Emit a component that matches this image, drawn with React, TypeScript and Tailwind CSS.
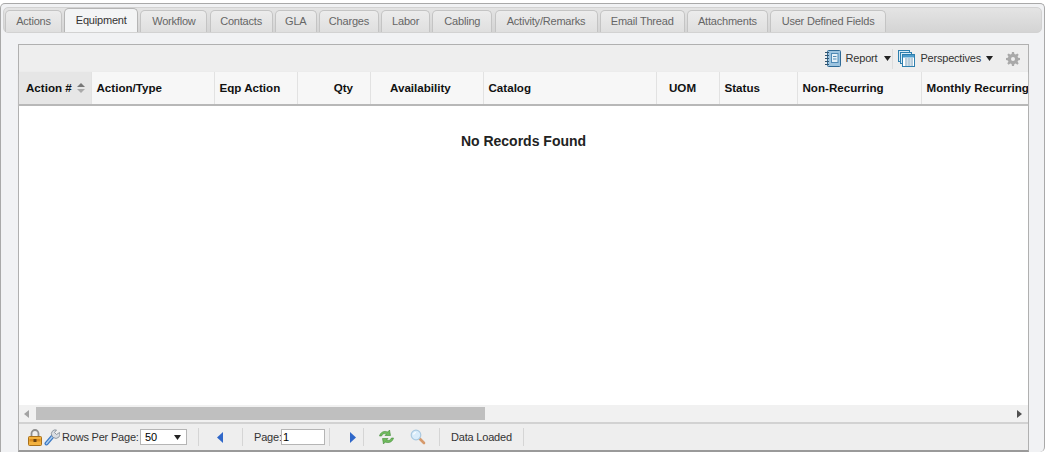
const tabs = [
  { label: 'Actions', width: 'w-[57px]' },
  { label: 'Equipment', width: 'w-[74px]', active: true },
  { label: 'Workflow', width: 'w-[67px]' },
  { label: 'Contacts', width: 'w-[63px]' },
  { label: 'GLA', width: 'w-[42px]' },
  { label: 'Charges', width: 'w-[60px]' },
  { label: 'Labor', width: 'w-[49px]' },
  { label: 'Cabling', width: 'w-[60px]' },
  { label: 'Activity/Remarks', width: 'w-[103px]' },
  { label: 'Email Thread', width: 'w-[85px]' },
  { label: 'Attachments', width: 'w-[81px]' },
  { label: 'User Defined Fields', width: 'w-[116px]' },
];

const columns = [
  { label: 'Action #', width: 'w-[73px]', sorted: true },
  { label: 'Action/Type', width: 'w-[123px]' },
  { label: 'Eqp Action', width: 'w-[83px]' },
  { label: 'Qty', width: 'w-[73px]', align: 'justify-end pr-[17px]' },
  { label: 'Availability', width: 'w-[113px]', align: 'pl-[19px]' },
  { label: 'Catalog', width: 'w-[173px]' },
  { label: 'UOM', width: 'w-[63px]', align: 'pl-[12px]' },
  { label: 'Status', width: 'w-[78px]' },
  { label: 'Non-Recurring', width: 'w-[124px]' },
  { label: 'Monthly Recurring', width: 'w-[107px]' },
];

const ReportIcon = () => (
  <svg width="16" height="17" viewBox="0 0 16 17">
    <rect x="2.500" y="0.500" width="13" height="16" rx="1" fill="#9cc4e0" stroke="#2f6a96" />
    <rect x="6.500" y="3.500" width="6.500" height="9" fill="#e6f1f8" stroke="#4f8ab5" />
    <path d="M8 6.500h3.500M8 9h3.500" stroke="#4f8ab5" />
    <path d="M0 2.500h4M0 5.500h4M0 8.500h4M0 11.500h4M0 14.500h4" stroke="#33556f" />
  </svg>
);

const PerspectivesIcon = () => (
  <svg width="17" height="17" viewBox="0 0 17 17">
    <rect x="0.500" y="0.500" width="11" height="11" fill="#d8ebf6" stroke="#2d7fae" />
    <rect x="2.500" y="2.500" width="11" height="11" fill="#d8ebf6" stroke="#2d7fae" />
    <rect x="4.500" y="4.500" width="12" height="12" fill="#ffffff" stroke="#2d7fae" />
    <rect x="5" y="5" width="11" height="2.500" fill="#4d9ccb" />
    <path d="M7 9h8M7 11h8M7 13h8M7 15h8M8 8v8M11 8v8M14 8v8" stroke="#8fb0c6" strokeWidth="0.800" />
  </svg>
);

const GearIcon = () => (
  <svg width="14" height="14" viewBox="0 0 14 14">
    <path
      d="M6 0h2l.4 2 1.300.5L11.400 1.400l1.300 1.300-1.100 1.700.5 1.300 1.900.3v2l-1.900.4-.5 1.300 1.100 1.600-1.300 1.400-1.700-1.100-1.300.5L8 14H6l-.4-1.900-1.300-.5-1.700 1.100-1.300-1.400 1.100-1.600-.5-1.300L0 8V6l1.900-.3.5-1.300-1.100-1.700 1.300-1.300 1.700 1.100 1.300-.5z"
      fill="#a9a9a9"
    />
    <circle cx="7" cy="7" r="2" fill="#eeeeee" />
  </svg>
);

const LockIcon = () => (
  <svg width="14" height="17" viewBox="0 0 14 17">
    <path d="M3.500 8V4.500a3.500 3.500 0 0 1 7 0V8" fill="none" stroke="#8f8f8f" strokeWidth="1.800" />
    <rect x="0.500" y="7.500" width="13" height="9" rx="1" fill="#f3b23f" stroke="#a8701a" />
    <rect x="1.500" y="10" width="11" height="2.500" fill="#d98c1f" />
    <rect x="5.500" y="10" width="3" height="3" fill="#6b4310" />
  </svg>
);

const WrenchIcon = () => (
  <svg width="16" height="17" viewBox="0 0 16 17">
    <path d="M2.500 14.500 8.500 7.500" stroke="#3b78c4" strokeWidth="4" strokeLinecap="round" />
    <path d="M2.500 14.500 8.500 7.500" stroke="#a9cdf0" strokeWidth="1.500" strokeLinecap="round" />
    <path d="M8 7a4 4 0 0 1 4.500-6L10.500 3.500l2 2L15.500 3.500A4 4 0 0 1 9.500 8.500z" fill="#d9dde2" stroke="#7d8791" strokeWidth="0.800" />
  </svg>
);

const RefreshIcon = () => (
  <svg width="17" height="16" viewBox="0 0 17 16">
    <path d="M1.500 7C2.500 3 6 1.500 10 3l1.500-2 1 5.500L7 6.500 8.500 5C6 4 4.500 5 3.500 7z" fill="#6fbb5c" stroke="#3f8a35" strokeWidth="0.600" />
    <path d="M15.500 9c-1 4-4.500 5.500-8.500 4l-1.500 2-1-5.500 5.500 0L8.500 11c2.500 1 4 0 5-2z" fill="#6fbb5c" stroke="#3f8a35" strokeWidth="0.600" />
  </svg>
);

const SearchIcon = () => (
  <svg width="16" height="16" viewBox="0 0 16 16">
    <path d="M9.500 9.500 14 14" stroke="#d69a6c" strokeWidth="2.600" strokeLinecap="round" />
    <circle cx="6" cy="6" r="4.800" fill="#d9ecfa" stroke="#aac9e0" strokeWidth="1.200" />
    <path d="M3.500 5.500a2.600 2.600 0 0 1 2.500-2" fill="none" stroke="#ffffff" strokeWidth="1.200" />
  </svg>
);

const DownArrow = () => (
  <svg width="7" height="5" viewBox="0 0 7 5">
    <path d="M0 0h7L3.500 5z" fill="#222222" />
  </svg>
);

const Divider = () => <div className="h-[18px] w-px bg-[#d5d5d5]" />;

export default function App() {
  return (
    <div className="h-[453px] w-[1047px] overflow-hidden bg-white pt-[3px] font-['Liberation_Sans',sans-serif] text-[11px] tracking-[-0.2px] text-[#111]">
      <div className="h-[449px] w-[1045px] rounded-t-[5px] rounded-br-[5px] border border-b-0 border-[#a9a9a9] bg-[#f1f2f4] px-[2px] pt-[3px]">
        {/* Tabs */}
        <div className="flex h-[26px] items-end gap-[2.200px] rounded-[5px] border border-[#d2d2d2] bg-gradient-to-b from-[#e4e4e4] to-[#d4d4d4] pl-[1px]">
          {tabs.map((tab) => (
            <div
              key={tab.label}
              className={`flex shrink-0 items-center justify-center rounded-t-[5px] border border-b-0 ${tab.width} ${
                tab.active
                  ? 'h-[24px] border-[#b5b5b5] bg-[#f3f4f5] text-[#333]'
                  : 'h-[22px] border-[#c4c4c4] bg-gradient-to-b from-[#ececec] to-[#dfdfdf] text-[#666]'
              }`}
            >
              {tab.label}
            </div>
          ))}
        </div>

        {/* Grid panel */}
        <div className="ml-[15px] mt-[11px] flex h-[408px] w-[1011px] flex-col border border-b-2 border-[#b0b0b0] border-b-[#9a9a9a] bg-[#eeeeee]">
          <div className="flex h-[27px] shrink-0 items-center justify-end gap-[5px] pr-[8px] text-[#333]">
            <ReportIcon />
            <span>Report</span>
            <div className="ml-[2px]">
              <DownArrow />
            </div>
            <div className="-ml-[4px] h-[20px] w-px bg-[#dddddd]" />
            <PerspectivesIcon />
            <span>Perspectives</span>
            <div className="mr-[8px]">
              <DownArrow />
            </div>
            <GearIcon />
          </div>

          {/* Column headers */}
          <div className="flex h-[34px] shrink-0 overflow-hidden border-b-[2px] border-b-[#b8b8b8] bg-[#f7f7f7] text-[11.600px] font-bold tracking-normal shadow-[0_1px_2px_#cccccc]">
            {columns.map((col) => (
              <div
                key={col.label}
                className={`flex shrink-0 items-center whitespace-nowrap border-r border-[#e2e2e2] ${col.width} ${
                  col.sorted ? 'bg-[#e6e6e6] pl-[7px]' : 'pl-[4.500px]'
                } ${col.align ?? ''}`}
              >
                {col.label}
                {col.sorted && (
                  <svg className="ml-[5px]" width="8" height="10" viewBox="0 0 8 10">
                    <path d="M4 0 8 4H0z" fill="#777777" />
                    <path d="M4 10 0 6h8z" fill="#aaaaaa" />
                  </svg>
                )}
              </div>
            ))}
          </div>

          {/* Body */}
          <div className="flex-1 bg-white pt-[25px] text-center text-[14px] font-bold tracking-normal text-[#222]">
            No Records Found
          </div>

          {/* Horizontal scrollbar */}
          <div className="flex h-[17px] shrink-0 items-center bg-[#f1f1f1]">
            <svg className="ml-[5px]" width="5" height="8" viewBox="0 0 5 8">
              <path d="M5 0v8L0 4z" fill="#a3a3a3" />
            </svg>
            <div className="ml-[7px] h-[13px] w-[449px] bg-[#bfbfbf]" />
            <svg className="ml-auto mr-[6px]" width="5" height="8" viewBox="0 0 5 8">
              <path d="M0 0v8l5-4z" fill="#505050" />
            </svg>
          </div>

          {/* Footer */}
          <div className="flex h-[28px] shrink-0 items-center border-t-2 border-[#d2d2d2] bg-[#eeeeee] pl-[9px] text-[#333]">
            <LockIcon />
            <div className="ml-[2px]">
              <WrenchIcon />
            </div>
            <span className="ml-[2px] w-[76px] whitespace-nowrap">Rows Per Page:</span>
            <div className="ml-[2px] flex h-[16px] w-[47px] items-center justify-between border border-[#b5b5b5] bg-white pl-[4px] pr-[5px] text-black">
              50
              <DownArrow />
            </div>
            <div className="ml-[11px]">
              <Divider />
            </div>
            <svg className="ml-[18px]" width="6" height="11" viewBox="0 0 6 11">
              <path d="M6 0v11L0 5.500z" fill="#2f67c9" />
            </svg>
            <div className="ml-[19px]">
              <Divider />
            </div>
            <span className="ml-[11px] w-[27px]">Page:</span>
            <div className="flex h-[16px] w-[44px] items-center border border-[#b5b5b5] bg-white pl-[1px] text-black">1</div>
            <div className="ml-[4px]">
              <Divider />
            </div>
            <svg className="ml-[20px]" width="6" height="11" viewBox="0 0 6 11">
              <path d="M0 0v11l6-5.500z" fill="#2f67c9" />
            </svg>
            <div className="ml-[7px]">
              <Divider />
            </div>
            <div className="ml-[14px]">
              <RefreshIcon />
            </div>
            <div className="ml-[15px]">
              <SearchIcon />
            </div>
            <div className="ml-[13px]">
              <Divider />
            </div>
            <span className="ml-[11px] w-[61px] whitespace-nowrap">Data Loaded</span>
            <div className="ml-[11px]">
              <Divider />
            </div>
          </div>
        </div>
      </div>
    </div>
  );
}
